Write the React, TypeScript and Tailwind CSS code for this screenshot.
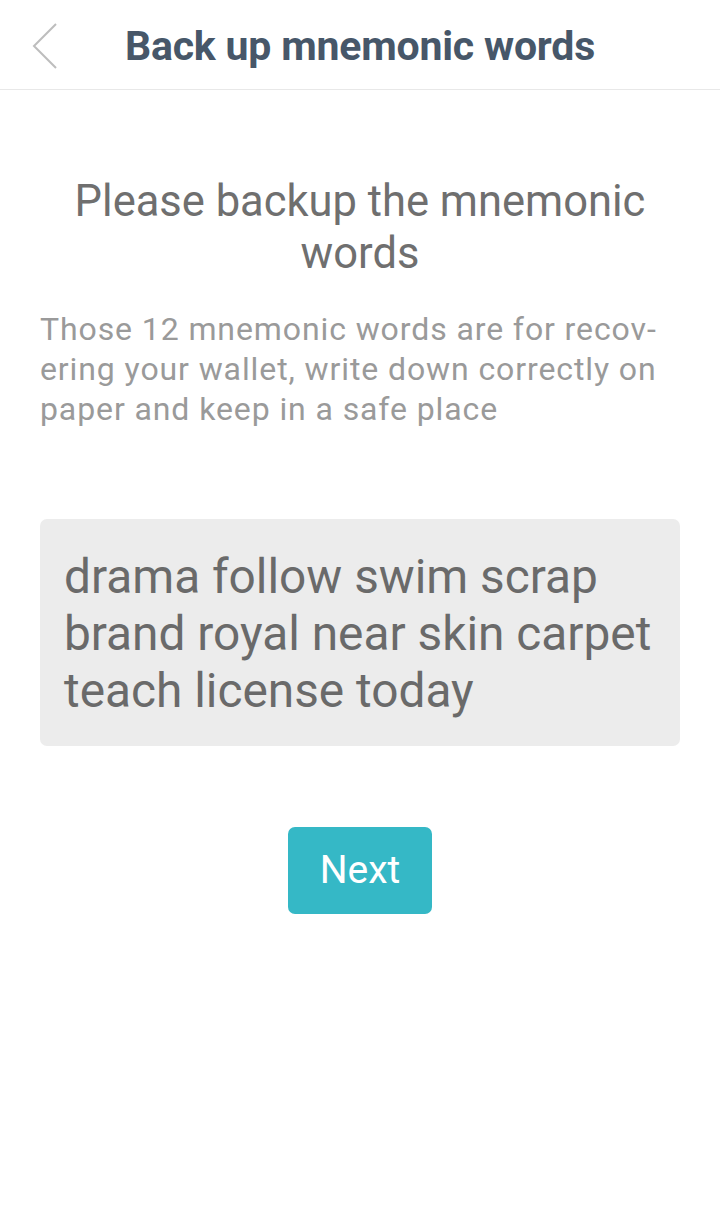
import React from "react";

export default function App() {
  return (
    <div className="w-[720px] h-[1231px] bg-white" style={{ fontFamily: "Roboto, 'Noto Sans', sans-serif" }}>
      <div className="relative h-[90px] border-b border-[#e8e8e8] flex items-center justify-center">
        <svg className="absolute left-[31px] top-[23px]" width="28" height="46" viewBox="0 0 28 46" fill="none">
          <path d="M25 1 L3 23 L25 45" stroke="#bdbdbd" strokeWidth="2" />
        </svg>
        <h1 className="mt-[3px] text-[41px] font-bold text-[#475769] tracking-[-0.2px] leading-none">Back up mnemonic words</h1>
      </div>
      <div className="px-[40px]">
        <h2 className="mt-[86px] text-center text-[43.5px] leading-[52px] text-[#6f6f6f]">Please backup the mnemonic words</h2>
        <p className="mt-[29px] text-[32px] leading-[40px] tracking-[0.9px] text-[#9a9a9a] whitespace-nowrap">
          Those 12 mnemonic words are for recov-
          <br />
          ering your wallet, write down correctly on
          <br />
          paper and keep in a safe place
        </p>
        <div className="mt-[90px] h-[227px] bg-[#ececec] rounded-[7px] pl-[24px] pr-[8px] pt-[30px] text-[47.8px] leading-[57px] text-[#6a6a6a]">
          drama follow swim scrap brand royal near skin carpet teach license today
        </div>
        <div className="flex justify-center mt-[81px]">
          <button className="w-[144px] h-[87px] bg-[#35b8c6] rounded-[7px] text-white text-[39px]">Next</button>
        </div>
      </div>
    </div>
  );
}
